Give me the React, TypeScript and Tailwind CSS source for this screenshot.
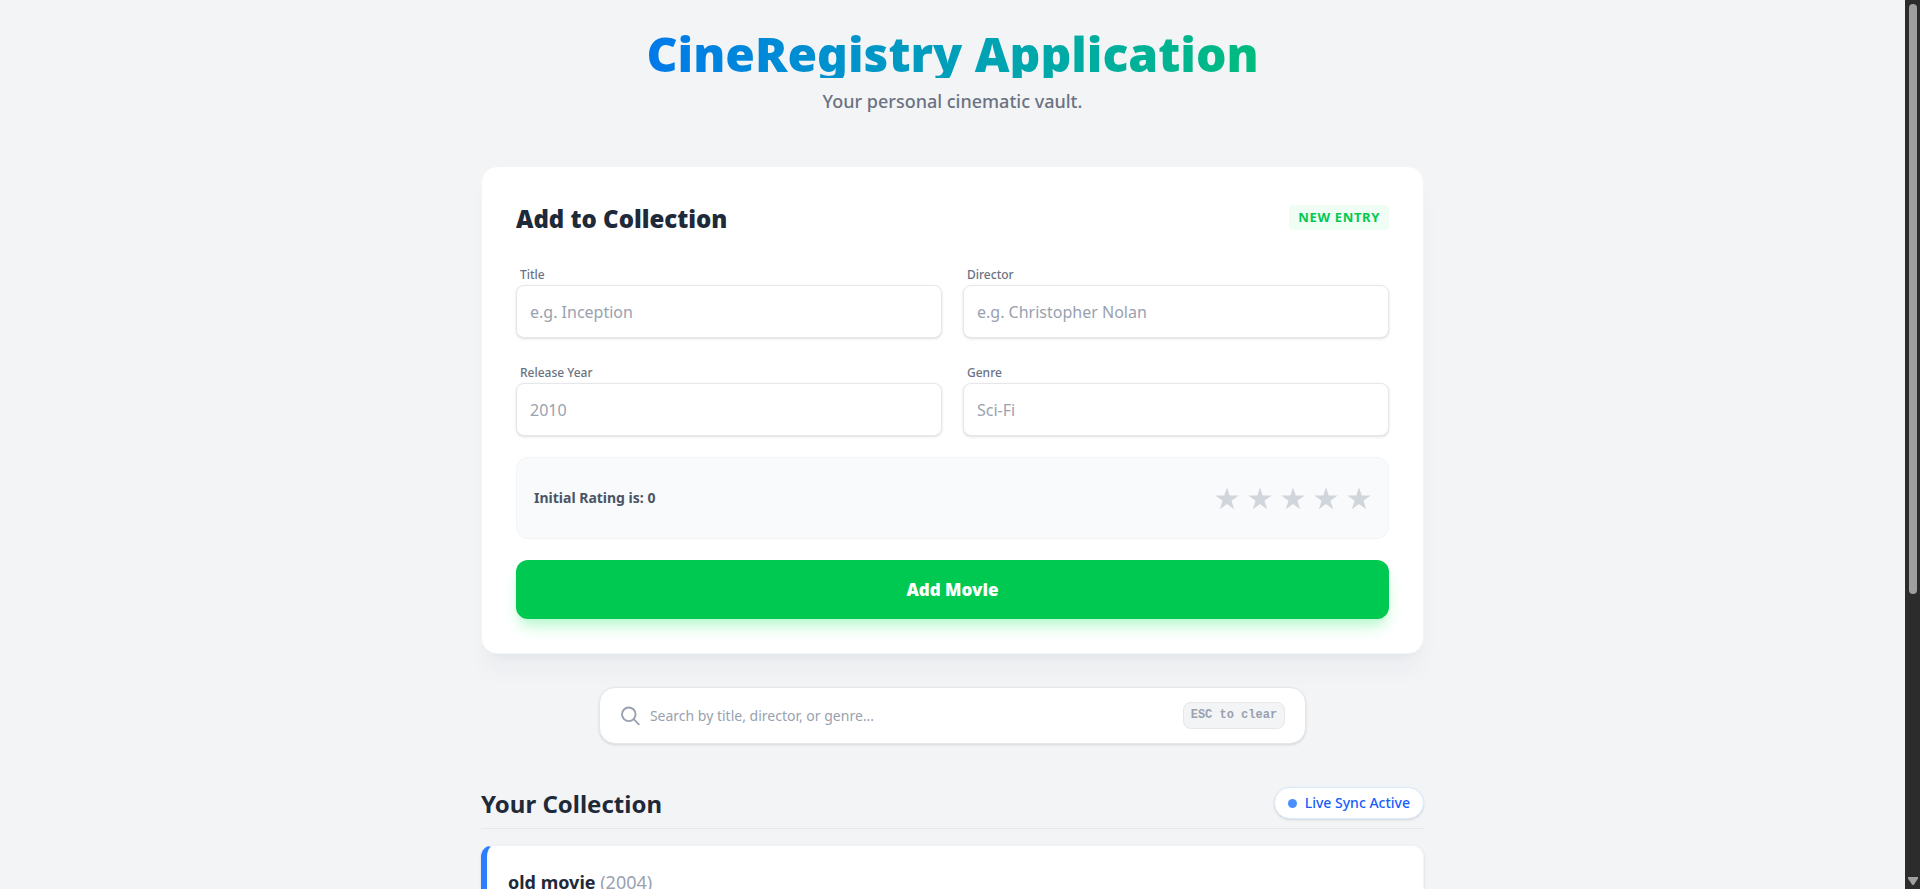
import { useState } from "react";

type Field = { id: string; label: string; placeholder: string };

const fields: Field[] = [
  { id: "title", label: "Title", placeholder: "e.g. Inception" },
  { id: "director", label: "Director", placeholder: "e.g. Christopher Nolan" },
  { id: "year", label: "Release Year", placeholder: "2010" },
  { id: "genre", label: "Genre", placeholder: "Sci-Fi" },
];

const movies = [{ title: "old movie", year: 2004 }];

function Header() {
  return (
    <header className="mb-[50px] text-center">
      <h1 className="mx-auto w-fit bg-linear-to-r from-[#0079ea] to-[#00bc7d] bg-clip-text text-[48px] leading-[48px] font-black text-transparent">
        CineRegistry Application
      </h1>
      <p className="mt-2 text-[18px] leading-[30px] font-medium text-gray-500">Your personal cinematic vault.</p>
    </header>
  );
}

function StarRating({ value, onChange }: { value: number; onChange: (n: number) => void }) {
  return (
    <div className="flex gap-[9px]">
      {[1, 2, 3, 4, 5].map((n) => (
        <button
          key={n}
          type="button"
          aria-label={`Rate ${n}`}
          onClick={() => onChange(n)}
          className={n <= value ? "text-yellow-400" : "text-gray-300"}
        >
          <svg viewBox="0 0 24 24" className="size-6" fill="currentColor" aria-hidden="true">
            <path d="M12 1.200l2.700 8.300h9l-7.300 5.200 2.800 8.500-7.200-5.200-7.200 5.200 2.800-8.500L.3 9.500h9z" />
          </svg>
        </button>
      ))}
    </div>
  );
}

function AddForm() {
  const [rating, setRating] = useState(0);
  return (
    <form
      onSubmit={(e) => e.preventDefault()}
      className="rounded-2xl border border-gray-100 bg-white p-[34px] shadow-[0_20px_25px_-5px_rgba(30,41,80,0.04),0_8px_10px_-6px_rgba(30,41,80,0.04)]"
    >
      <div className="mb-7 flex items-start justify-between">
        <h2 className="text-[24px] leading-[36px] font-black text-gray-800">Add to Collection</h2>
        <span className="mt-1 rounded bg-green-50 px-[9px] text-[13px] leading-[25px] font-bold tracking-wider text-green-500">
          NEW ENTRY
        </span>
      </div>
      <div className="grid grid-cols-2 gap-x-[21px] gap-y-[25px]">
        {fields.map((f) => (
          <div key={f.id} className="flex flex-col">
            <label htmlFor={f.id} className="ml-1 pb-px text-[12px] leading-[19px] font-medium text-gray-500">
              {f.label}
            </label>
            <input
              id={f.id}
              placeholder={f.placeholder}
              className="h-[53px] w-full rounded-lg border border-gray-200 bg-white px-[13px] text-[16px] shadow-sm outline-none placeholder:text-gray-400"
            />
          </div>
        ))}
      </div>
      <div className="mt-[21px] flex h-[82px] items-center justify-between rounded-xl border border-gray-100 bg-gray-50 px-[17px]">
        <span className="text-[14px] leading-5 font-bold text-gray-600">Initial Rating is: {rating}</span>
        <StarRating value={rating} onChange={setRating} />
      </div>
      <button
        type="submit"
        className="mt-[21px] h-[59px] w-full rounded-xl bg-green-500 text-[17px] font-black text-white shadow-lg shadow-green-200"
      >
        Add Movie
      </button>
    </form>
  );
}

function SearchBar() {
  return (
    <div className="mx-auto mt-[33px] flex h-[57px] w-3/4 items-center rounded-2xl border border-gray-200 bg-white px-5 shadow-sm">
      <svg viewBox="0 0 20 20" className="mr-2.5 size-5 text-gray-400" fill="none" stroke="currentColor" strokeWidth="1.900" aria-hidden="true">
        <circle cx="8.800" cy="8.300" r="6.800" />
        <path d="M13.700 13.200L18.800 18.300" strokeLinecap="round" />
      </svg>
      <input
        aria-label="Search movies"
        placeholder="Search by title, director, or genre..."
        className="min-w-0 flex-1 text-[14px] outline-none placeholder:text-gray-400"
      />
      <kbd className="rounded-lg border border-gray-200 bg-gray-100 px-[7px] font-['Liberation_Mono',monospace] text-[12px] leading-[25px] font-bold text-gray-400">
        ESC to clear
      </kbd>
    </div>
  );
}

function Collection() {
  return (
    <section className="mt-[43px]">
      <div className="mb-4 flex items-start justify-between border-b border-gray-200 pb-2">
        <h2 className="text-[24px] leading-[33px] font-bold text-gray-800">Your Collection</h2>
        <span className="flex items-center gap-2 rounded-full border border-blue-100 bg-white px-[13px] text-[14px] leading-[30px] font-medium text-blue-600 shadow-sm">
          <span className="size-[9px] rounded-full bg-[#4b8fff]" />
          Live Sync Active
        </span>
      </div>
      {movies.map((m) => (
        <article
          key={m.title}
          className="rounded-xl border border-l-[6px] border-gray-100 border-l-blue-500 bg-white px-[21px] py-[21px] shadow-sm"
        >
          <h3 className="text-[18px] leading-[30px] font-bold text-gray-800">
            {m.title} <span className="font-normal text-gray-400">({m.year})</span>
          </h3>
        </article>
      ))}
    </section>
  );
}

function ScrollTrack() {
  return (
    <div aria-hidden="true" className="flex w-[15px] shrink-0 flex-col items-center justify-between bg-[#2c2c2c] py-1">
      <div className="h-[67%] w-2 rounded-full bg-[#9f9f9f]" />
      <svg viewBox="0 0 10 8" className="h-2 w-2.5" fill="#9f9f9f">
        <path d="M0 0h10v1.500L6 7.500a1.200 1.200 0 0 1-2 0L0 1.500z" />
      </svg>
    </div>
  );
}

export default function App() {
  return (
    <div className="flex h-screen bg-gray-100 font-['Noto_Sans',sans-serif]">
      <main className="flex-1 overflow-y-auto [scrollbar-width:none]">
        <div className="mx-auto max-w-[943px] py-[30px]">
          <Header />
          <AddForm />
          <SearchBar />
          <Collection />
        </div>
      </main>
      <ScrollTrack />
    </div>
  );
}
